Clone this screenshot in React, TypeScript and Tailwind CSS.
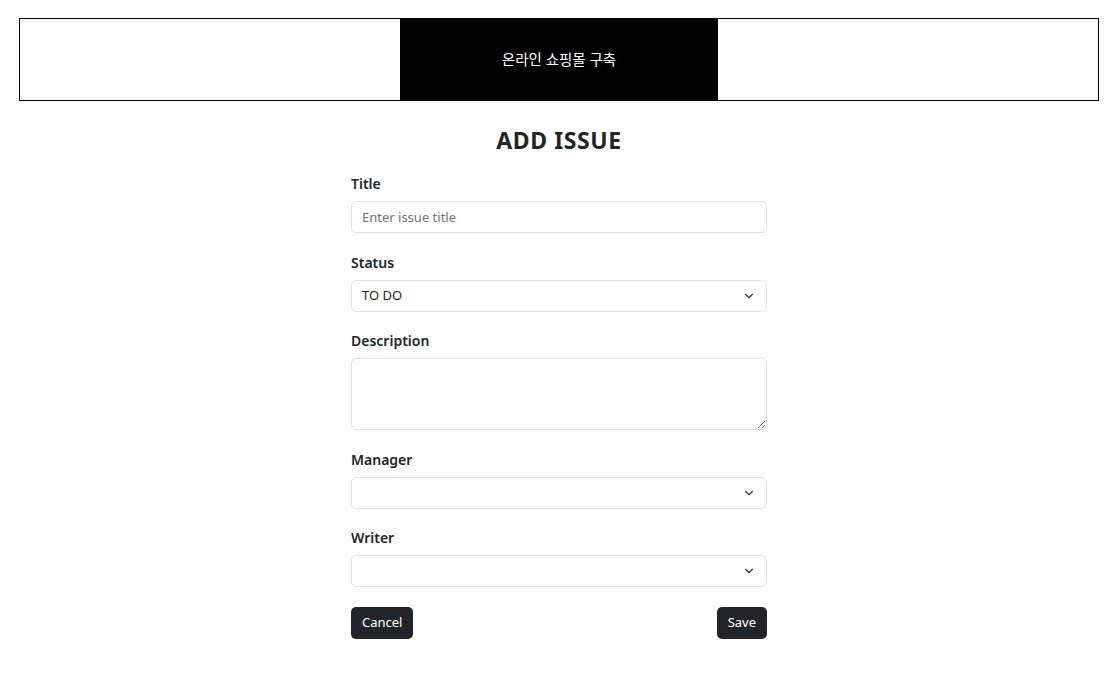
import { ChevronDown } from 'lucide-react';

const FONT = "font-['Noto_Sans','Noto_Sans_CJK_KR',sans-serif]";

const Label = ({ children }: { children: string }) => (
  <label className="block h-5 mb-[7px] text-[14px] leading-5 font-semibold text-[#212529]">
    {children}
  </label>
);

const Select = ({ value }: { value: string }) => (
  <div className="relative">
    <select
      defaultValue={value}
      className="w-full h-8 appearance-none rounded-[5px] border border-[#dee2e6] bg-white pl-[10px] pr-9 text-[13px] text-[#212529] outline-none"
    >
      <option value={value}>{value}</option>
    </select>
    <ChevronDown
      className="pointer-events-none absolute right-[11px] top-1/2 -translate-y-1/2 text-[#343a40]"
      size={14}
      strokeWidth={2}
    />
  </div>
);

const App = () => {
  return (
    <div className={`${FONT} min-h-[678px] bg-white text-[#212529]`}>
      {/* Header */}
      <div className="pt-[18px] px-[19px] pr-[21px]">
        <div className="flex justify-center h-[83px] border border-black">
          <div className="flex items-center justify-center w-[318px] bg-black text-white text-[14.5px]">
            온라인 쇼핑몰 구축
          </div>
        </div>
      </div>

      {/* Form */}
      <div className="mx-auto w-[416px] -translate-x-[1px]">
        <h1 className="mt-[25px] mb-[19px] text-center text-[23px] leading-[29px] font-bold tracking-wide">
          ADD ISSUE
        </h1>

        <div className="flex flex-col gap-[19.5px]">
          <div>
            <Label>Title</Label>
            <input
              placeholder="Enter issue title"
              className="w-full h-8 rounded-[5px] border border-[#dee2e6] px-[10px] text-[13px] outline-none placeholder:text-[#6c757d]"
            />
          </div>

          <div>
            <Label>Status</Label>
            <Select value="TO DO" />
          </div>

          <div>
            <Label>Description</Label>
            <textarea className="block w-full h-[72px] rounded-[5px] border border-[#dee2e6] px-[10px] py-1 text-[13px] outline-none" />
          </div>

          <div>
            <Label>Manager</Label>
            <Select value="" />
          </div>

          <div>
            <Label>Writer</Label>
            <Select value="" />
          </div>

          <div className="flex justify-between">
            <button className="h-8 rounded-[5px] bg-[#212529] px-[11px] text-[13px] text-white">
              Cancel
            </button>
            <button className="h-8 rounded-[5px] bg-[#212529] px-[11px] text-[13px] text-white">
              Save
            </button>
          </div>
        </div>
      </div>
    </div>
  );
};

export default App;
